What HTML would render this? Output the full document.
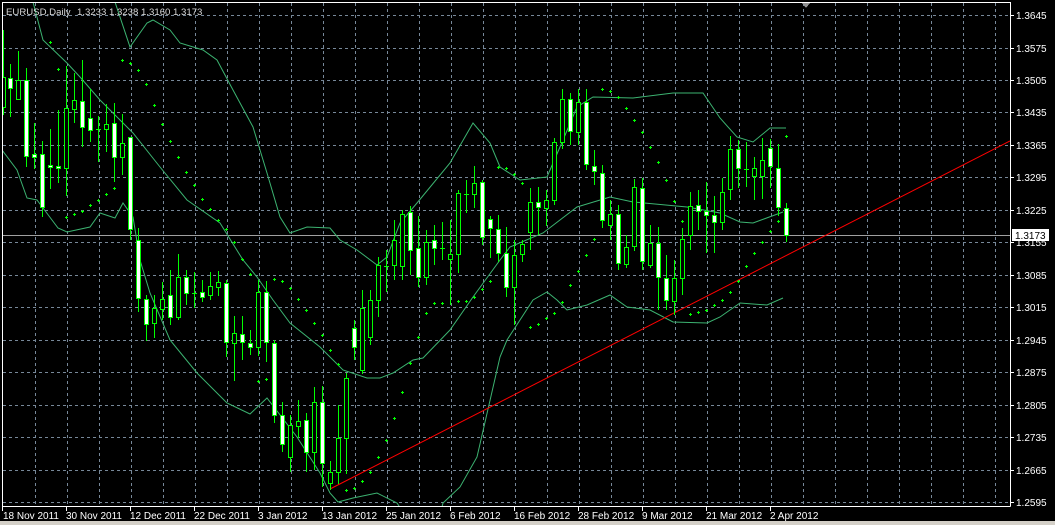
<!DOCTYPE html>
<html><head><meta charset="utf-8"><style>
html,body{margin:0;padding:0;background:#000;width:1055px;height:525px;overflow:hidden}
svg{display:block}
text{font-family:"Liberation Sans",sans-serif;font-size:10px;fill:#fff}
</style></head><body>
<svg width="1055" height="525" viewBox="0 0 1055 525" shape-rendering="crispEdges">
<defs><clipPath id="c"><rect x="3" y="3" width="1007" height="503"/></clipPath></defs>
<rect x="0" y="0" width="1055" height="525" fill="#000"/>
<rect x="0" y="521" width="1055" height="4" fill="#d4d0c8"/>
<g stroke="#778899" stroke-width="1" stroke-dasharray="3,3" fill="none">
<path d="M3 15.5H1010M3 48.5H1010M3 80.5H1010M3 112.5H1010M3 145.5H1010M3 177.5H1010M3 210.5H1010M3 242.5H1010M3 275.5H1010M3 307.5H1010M3 340.5H1010M3 372.5H1010M3 405.5H1010M3 437.5H1010M3 470.5H1010M3 502.5H1010"/>
<path d="M35.5 3V506M67.5 3V506M99.5 3V506M131.5 3V506M163.5 3V506M195.5 3V506M227.5 3V506M259.5 3V506M291.5 3V506M323.5 3V506M355.5 3V506M387.5 3V506M419.5 3V506M451.5 3V506M483.5 3V506M515.5 3V506M547.5 3V506M579.5 3V506M611.5 3V506M643.5 3V506M675.5 3V506M707.5 3V506M739.5 3V506M771.5 3V506M803.5 3V506M835.5 3V506M867.5 3V506M899.5 3V506M931.5 3V506M963.5 3V506M995.5 3V506"/>
</g>
<path d="M3 235.5H1010" stroke="#a0a0a0" stroke-width="1"/>
<g clip-path="url(#c)" fill="none" stroke="#3cb371" stroke-width="1" shape-rendering="auto">
<polyline points="115,2 130,47 147,23 153,20 170,30 180,43 203,50 217,60 233,90 253,127 267,173 280,217 290,233 307,227 330,228 340,240 357,250 377,265 387,257 400,223 417,203 450,163 473,123 490,143 500,167 520,180 547,177 563,140 577,107 593,97 633,98 673,93 703,93 720,118 737,137 753,142 770,128 786,128"/>
<polyline points="33,2 43,40 67,63 80,77 100,100 133,133 160,167 187,200 220,223 243,260 257,277 273,300 290,323 320,347 343,370 367,378 380,378 393,373 413,360 423,358 450,330 473,297 500,260 510,247 543,233 577,207 610,197 633,202 687,207 720,213 740,222 753,223 783,212"/>
<polyline points="2,150 17,170 27,198 37,200 43,208 58,228 67,232 90,227 100,213 115,218 123,203 133,217 140,260 150,293 170,340 197,373 217,393 227,403 250,414 267,398 297,437 320,473 330,493 338,502 353,498 377,493 397,503 405,515 440,515 443,503 460,487 477,457 500,357 507,340 533,300 547,292 557,300 567,310 587,305 610,295 627,307 650,310 673,322 707,323 720,317 740,303 767,305 783,298"/>
</g>
<path clip-path="url(#c)" d="M330 489L1010 141" stroke="#ff0000" stroke-width="1" shape-rendering="auto"/>
<g clip-path="url(#c)" stroke="#00ff00" stroke-width="1">
<path fill="none" d="M3.5 30V115M10.5 64V117M18.5 51V99M26.5 68V167M34.5 123V169M42.5 141V217M50.5 129V189M58.5 110V183M66.5 66V196M74.5 73V123M82.5 60V147M90.5 89V142M98.5 116V162M106.5 104V152M114.5 103V182M122.5 114V175M130.5 137V240M138.5 228V312M146.5 295V341M154.5 295V338M162.5 282V320M170.5 270V325M178.5 254V320M186.5 270V305M194.5 272V308M202.5 280V302M210.5 272V300M218.5 271V296M226.5 280V357M234.5 316V381M242.5 316V360M250.5 330V355M258.5 280V356M266.5 281V362M274.5 340V423M282.5 402V452M290.5 415V472M298.5 400V438M306.5 413V472M314.5 387V470M322.5 386V487M330.5 461V490M338.5 405V484M346.5 373V474M354.5 320V360M362.5 290V374M370.5 290V345M378.5 257V317M386.5 250V292M394.5 220V280M402.5 210V280M410.5 206V275M418.5 216V287M426.5 230V285M434.5 225V265M442.5 222V260M450.5 220V305M458.5 190V273M466.5 180V213M474.5 166V208M482.5 180V245M490.5 216V258M498.5 215V262M506.5 227V297M514.5 240V325M522.5 240V262M530.5 188V250M538.5 187V235M546.5 190V226M554.5 138V205M562.5 89V149M570.5 93V145M578.5 89V145M586.5 89V170M594.5 150V185M602.5 165V228M610.5 200V240M618.5 205V270M626.5 235V268M634.5 179V251M642.5 178V270M650.5 225V268M658.5 227V310M666.5 255V310M674.5 260V315M682.5 228V295M690.5 192V250M698.5 190V230M706.5 182V253M714.5 196V253M722.5 178V230M730.5 136V200M738.5 140V188M746.5 142V187M754.5 157V200M762.5 138V199M770.5 139V188M778.5 144V216M786.5 203V242"/>
<path fill="none" d="M96 129.5H101M184 293.5H189M192 293.5H197M384 266.5H389M440 248.5H445M464 194.5H469M744 169.5H749"/>
<g fill="#000">
<rect x="1.5" y="77.5" width="4" height="30"/><rect x="16.5" y="80.5" width="4" height="19"/><rect x="64.5" y="108.5" width="4" height="60"/><rect x="72.5" y="100.5" width="4" height="9"/><rect x="104.5" y="124.5" width="4" height="5"/><rect x="120.5" y="143.5" width="4" height="14"/><rect x="152.5" y="308.5" width="4" height="15"/><rect x="160.5" y="299.5" width="4" height="10"/><rect x="176.5" y="277.5" width="4" height="40"/><rect x="208.5" y="286.5" width="4" height="9"/><rect x="216.5" y="282.5" width="4" height="5"/><rect x="232.5" y="333.5" width="4" height="10"/><rect x="256.5" y="292.5" width="4" height="55"/><rect x="288.5" y="425.5" width="4" height="32"/><rect x="296.5" y="421.5" width="4" height="5"/><rect x="312.5" y="402.5" width="4" height="50"/><rect x="328.5" y="472.5" width="4" height="11"/><rect x="336.5" y="438.5" width="4" height="34"/><rect x="344.5" y="378.5" width="4" height="60"/><rect x="360.5" y="308.5" width="4" height="62"/><rect x="368.5" y="300.5" width="4" height="37"/><rect x="376.5" y="265.5" width="4" height="35"/><rect x="392.5" y="240.5" width="4" height="25"/><rect x="400.5" y="214.5" width="4" height="52"/><rect x="424.5" y="242.5" width="4" height="35"/><rect x="448.5" y="254.5" width="4" height="5"/><rect x="456.5" y="193.5" width="4" height="61"/><rect x="472.5" y="183.5" width="4" height="11"/><rect x="512.5" y="255.5" width="4" height="32"/><rect x="520.5" y="244.5" width="4" height="10"/><rect x="528.5" y="202.5" width="4" height="30"/><rect x="544.5" y="200.5" width="4" height="8"/><rect x="552.5" y="142.5" width="4" height="58"/><rect x="560.5" y="99.5" width="4" height="43"/><rect x="576.5" y="102.5" width="4" height="30"/><rect x="608.5" y="214.5" width="4" height="11"/><rect x="624.5" y="247.5" width="4" height="17"/><rect x="632.5" y="187.5" width="4" height="59"/><rect x="648.5" y="243.5" width="4" height="22"/><rect x="672.5" y="278.5" width="4" height="23"/><rect x="680.5" y="239.5" width="4" height="39"/><rect x="688.5" y="206.5" width="4" height="29"/><rect x="720.5" y="192.5" width="4" height="30"/><rect x="728.5" y="149.5" width="4" height="40"/><rect x="752.5" y="168.5" width="4" height="8"/><rect x="760.5" y="160.5" width="4" height="16"/>
</g>
<g fill="#fff">
<rect x="8.5" y="78.5" width="4" height="10"/><rect x="24.5" y="80.5" width="4" height="76"/><rect x="32.5" y="154.5" width="4" height="3"/><rect x="40.5" y="154.5" width="4" height="53"/><rect x="48.5" y="165.5" width="4" height="2"/><rect x="56.5" y="166.5" width="4" height="2"/><rect x="80.5" y="101.5" width="4" height="26"/><rect x="88.5" y="118.5" width="4" height="12"/><rect x="112.5" y="123.5" width="4" height="34"/><rect x="128.5" y="137.5" width="4" height="92"/><rect x="136.5" y="240.5" width="4" height="58"/><rect x="144.5" y="299.5" width="4" height="25"/><rect x="168.5" y="295.5" width="4" height="22"/><rect x="184.5" y="277.5" width="4" height="16"/><rect x="200.5" y="292.5" width="4" height="5"/><rect x="224.5" y="283.5" width="4" height="59"/><rect x="240.5" y="334.5" width="4" height="8"/><rect x="248.5" y="343.5" width="4" height="4"/><rect x="264.5" y="292.5" width="4" height="50"/><rect x="272.5" y="343.5" width="4" height="72"/><rect x="280.5" y="415.5" width="4" height="29"/><rect x="304.5" y="420.5" width="4" height="32"/><rect x="320.5" y="402.5" width="4" height="61"/><rect x="352.5" y="328.5" width="4" height="19"/><rect x="408.5" y="212.5" width="4" height="38"/><rect x="416.5" y="248.5" width="4" height="29"/><rect x="432.5" y="240.5" width="4" height="8"/><rect x="480.5" y="182.5" width="4" height="55"/><rect x="488.5" y="219.5" width="4" height="9"/><rect x="496.5" y="229.5" width="4" height="24"/><rect x="504.5" y="253.5" width="4" height="34"/><rect x="536.5" y="202.5" width="4" height="5"/><rect x="568.5" y="99.5" width="4" height="32"/><rect x="584.5" y="102.5" width="4" height="62"/><rect x="592.5" y="166.5" width="4" height="5"/><rect x="600.5" y="173.5" width="4" height="47"/><rect x="616.5" y="214.5" width="4" height="49"/><rect x="640.5" y="188.5" width="4" height="73"/><rect x="656.5" y="243.5" width="4" height="34"/><rect x="664.5" y="278.5" width="4" height="22"/><rect x="696.5" y="205.5" width="4" height="6"/><rect x="704.5" y="211.5" width="4" height="4"/><rect x="712.5" y="215.5" width="4" height="7"/><rect x="736.5" y="149.5" width="4" height="19"/><rect x="768.5" y="148.5" width="4" height="18"/><rect x="776.5" y="168.5" width="4" height="39"/><rect x="784.5" y="208.5" width="4" height="27"/>
</g>
</g>
<path clip-path="url(#c)" fill="none" stroke="#00ff00" stroke-width="1" d="M49 42.5h3M50.5 41v3M57 69.5h3M58.5 68v3M121 60.5h3M122.5 59v3M129 63.5h3M130.5 62v3M137 70.5h3M138.5 69v3M145 84.5h3M146.5 83v3M153 105.5h3M154.5 104v3M161 124.5h3M162.5 123v3M169 141.5h3M170.5 140v3M177 157.5h3M178.5 156v3M185 172.5h3M186.5 171v3M193 185.5h3M194.5 184v3M201 199.5h3M202.5 198v3M209 209.5h3M210.5 208v3M217 220.5h3M218.5 219v3M225 229.5h3M226.5 228v3M233 242.5h3M234.5 241v3M241 259.5h3M242.5 258v3M249 274.5h3M250.5 273v3M273 279.5h3M274.5 278v3M281 281.5h3M282.5 280v3M289 288.5h3M290.5 287v3M297 299.5h3M298.5 298v3M305 310.5h3M306.5 309v3M313 323.5h3M314.5 322v3M321 335.5h3M322.5 334v3M329 350.5h3M330.5 349v3M337 364.5h3M338.5 363v3M65 217.5h3M66.5 216v3M73 214.5h3M74.5 213v3M81 211.5h3M82.5 210v3M89 205.5h3M90.5 204v3M97 200.5h3M98.5 199v3M105 194.5h3M106.5 193v3M113 188.5h3M114.5 187v3M257 381.5h3M258.5 380v3M265 379.5h3M266.5 378v3M345 490.5h3M346.5 489v3M353 488.5h3M354.5 487v3M361 481.5h3M362.5 480v3M369 472.5h3M370.5 471v3M377 457.5h3M378.5 456v3M385 440.5h3M386.5 439v3M393 418.5h3M394.5 417v3M401 392.5h3M402.5 391v3M409 363.5h3M410.5 362v3M417 337.5h3M418.5 336v3M425 313.5h3M426.5 312v3M433 303.5h3M434.5 302v3M441 303.5h3M442.5 302v3M457 301.5h3M458.5 300v3M465 301.5h3M466.5 300v3M473 297.5h3M474.5 296v3M481 289.5h3M482.5 288v3M489 281.5h3M490.5 280v3M497 167.5h3M498.5 166v3M505 168.5h3M506.5 167v3M513 174.5h3M514.5 173v3M521 183.5h3M522.5 182v3M529 327.5h3M530.5 326v3M537 324.5h3M538.5 323v3M545 318.5h3M546.5 317v3M553 313.5h3M554.5 312v3M561 302.5h3M562.5 301v3M569 285.5h3M570.5 284v3M577 271.5h3M578.5 270v3M585 255.5h3M586.5 254v3M593 239.5h3M594.5 238v3M601 89.5h3M602.5 88v3M609 91.5h3M610.5 90v3M617 97.5h3M618.5 96v3M625 108.5h3M626.5 107v3M633 120.5h3M634.5 119v3M641 132.5h3M642.5 131v3M649 147.5h3M650.5 146v3M657 162.5h3M658.5 161v3M665 180.5h3M666.5 179v3M673 201.5h3M674.5 200v3M681 221.5h3M682.5 220v3M689 314.5h3M690.5 313v3M697 312.5h3M698.5 311v3M705 310.5h3M706.5 309v3M713 305.5h3M714.5 304v3M721 300.5h3M722.5 299v3M729 292.5h3M730.5 291v3M737 281.5h3M738.5 280v3M745 266.5h3M746.5 265v3M753 253.5h3M754.5 252v3M761 242.5h3M762.5 241v3M769 231.5h3M770.5 230v3M777 221.5h3M778.5 220v3M785 136.5h3M786.5 135v3"/>
<g stroke="#fff" stroke-width="1" fill="none">
<path d="M2.5 2V506.5M2 2.5H1010.5M1010.5 2V506.5M2 506.5H1010.5"/>
<path d="M1010 15.5h4M1010 48.5h4M1010 80.5h4M1010 112.5h4M1010 145.5h4M1010 177.5h4M1010 210.5h4M1010 242.5h4M1010 275.5h4M1010 307.5h4M1010 340.5h4M1010 372.5h4M1010 405.5h4M1010 437.5h4M1010 470.5h4M1010 502.5h4"/>
<path d="M2.5 506V511M66.5 506V511M130.5 506V511M194.5 506V511M258.5 506V511M322.5 506V511M386.5 506V511M450.5 506V511M514.5 506V511M578.5 506V511M642.5 506V511M706.5 506V511M770.5 506V511"/>
</g>
<path d="M802 3h8l-4 5z" fill="#909090"/>
<text x="6" y="15" style="font-size:9.6px;fill:#d8d8d8">EURUSD,Daily</text>
<text x="77" y="15" style="font-size:9.6px;fill:#d8d8d8">1.3233 1.3238 1.3160 1.3173</text>
<g>
<text x="1016" y="19">1.3645</text><text x="1016" y="52">1.3575</text><text x="1016" y="84">1.3505</text><text x="1016" y="116">1.3435</text><text x="1016" y="149">1.3365</text><text x="1016" y="181">1.3295</text><text x="1016" y="214">1.3225</text><text x="1016" y="246">1.3155</text><text x="1016" y="279">1.3085</text><text x="1016" y="311">1.3015</text><text x="1016" y="344">1.2945</text><text x="1016" y="376">1.2875</text><text x="1016" y="409">1.2805</text><text x="1016" y="441">1.2735</text><text x="1016" y="474">1.2665</text><text x="1016" y="506">1.2595</text>
</g>
<rect x="1012" y="229" width="37" height="12" fill="#fff"/>
<text x="1015" y="239" style="fill:#000">1.3173</text>
<g style="font-size:9.6px">
<text x="3" y="519">18 Nov 2011</text><text x="66" y="519">30 Nov 2011</text><text x="130" y="519">12 Dec 2011</text><text x="194" y="519">22 Dec 2011</text><text x="258" y="519">3 Jan 2012</text><text x="322" y="519">13 Jan 2012</text><text x="386" y="519">25 Jan 2012</text><text x="450" y="519">6 Feb 2012</text><text x="514" y="519">16 Feb 2012</text><text x="578" y="519">28 Feb 2012</text><text x="642" y="519">9 Mar 2012</text><text x="706" y="519">21 Mar 2012</text><text x="770" y="519">2 Apr 2012</text>
</g>
</svg>
</body></html>
